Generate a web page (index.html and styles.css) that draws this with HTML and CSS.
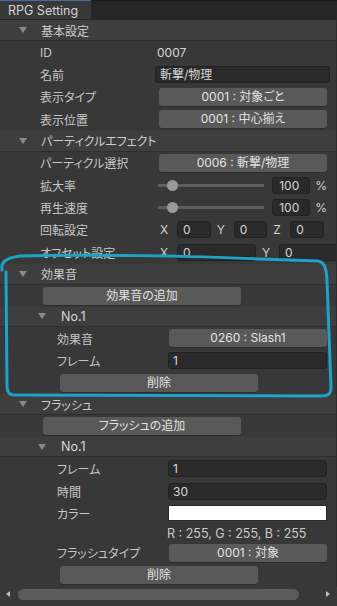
FILE: index.html
```html
<!doctype html>
<html lang="ja">
<head>
<meta charset="UTF-8">
<title>RPG Setting</title>
<meta name="viewport" content="width=device-width,initial-scale=1">
<link rel="stylesheet" href="styles.css">
</head>
<body>
<div class="window">
 <div class="tabbar"><div class="tab">RPG Setting</div></div>

 <div class="panel">
  <div class="header"><span class="tri"></span>基本設定</div>
  <div class="row"><span class="label">ID</span><span class="value">0007</span></div>
  <div class="row"><span class="label">名前</span><div class="field wide">斬撃/物理</div></div>
  <div class="row"><span class="label">表示タイプ</span><div class="btn">0001 : 対象ごと</div></div>
  <div class="row"><span class="label">表示位置</span><div class="btn">0001 : 中心揃え</div></div>

  <div class="header"><span class="tri"></span>パーティクルエフェクト</div>
  <div class="row"><span class="label">パーティクル選択</span><div class="btn">0006 : 斬撃/物理</div></div>
  <div class="row"><span class="label">拡大率</span><div class="slider"><span class="knob"></span></div><div class="field num">100</div><span class="unit">%</span></div>
  <div class="row"><span class="label">再生速度</span><div class="slider"><span class="knob"></span></div><div class="field num">100</div><span class="unit">%</span></div>
  <div class="row"><span class="label">回転設定</span>
   <div class="xyz">
    <div class="axis"><span class="letter">X</span><div class="field">0</div></div>
    <div class="axis"><span class="letter">Y</span><div class="field">0</div></div>
    <div class="axis"><span class="letter">Z</span><div class="field">0</div></div>
   </div>
  </div>
  <div class="row"><span class="label">オフセット設定</span>
   <div class="xy">
    <div class="axis"><span class="letter">X</span><div class="field">0</div></div>
    <div class="axis"><span class="letter">Y</span><div class="field">0</div></div>
   </div>
  </div>

  <div class="header"><span class="tri"></span>効果音</div>
  <div class="row add"><div class="btn">効果音の追加</div></div>
  <div class="subheader"><span class="tri"></span>No.1</div>
  <div class="row sub"><span class="label">効果音</span><div class="btn">0260 : Slash1</div></div>
  <div class="row sub"><span class="label">フレーム</span><div class="field">1</div></div>
  <div class="row del"><div class="btn">削除</div></div>

  <div class="header"><span class="tri"></span>フラッシュ</div>
  <div class="row add"><div class="btn">フラッシュの追加</div></div>
  <div class="subheader"><span class="tri"></span>No.1</div>
  <div class="row sub"><span class="label">フレーム</span><div class="field">1</div></div>
  <div class="row sub"><span class="label">時間</span><div class="field">30</div></div>
  <div class="row sub"><span class="label">カラー</span><div class="swatch"></div></div>
  <div class="rgb">R : 255, G : 255, B : 255</div>
  <div class="row sub"><span class="label">フラッシュタイプ</span><div class="btn">0001 : 対象</div></div>
  <div class="row del"><div class="btn">削除</div></div>
 </div>

 <div class="hscroll">
  <span class="arrow left"></span>
  <div class="thumb"></div>
  <span class="arrow right"></span>
 </div>

 <!-- hand drawn marker round the sound section -->
 <svg class="annotation" width="337" height="606" viewBox="0 0 337 606">
  <path d="M2 270 C1 263 4 258 20 256 C80 254 200 256 260 259 L318 261 C324 262 326 266 327 280 L331 388 C331 394 328 396 322 396 L14 395 C9 395 7 392 7 386 L6 272"
        fill="none" stroke="#1ea2c6" stroke-width="3" stroke-linecap="round" stroke-linejoin="round"/>
 </svg>
</div>
</body>
</html>
```

FILE: styles.css
```css
* {
    box-sizing: border-box;
}
body {
    margin: 0;
    background: #383838;
    font-family: "Inter", "Noto Sans CJK JP", sans-serif;
    font-size: 12px;
    color: #c6c6c6;
    font-feature-settings: "palt";
}
.window {
    position: relative;
    width: 337px;
    height: 606px;
    overflow: hidden;
    background: #383838;
}

/* tab strip */
.tabbar {
    height: 20px;
    background: #262626;
    border-top: 1px solid #1c1c1c;
}
.tab {
    width: 91px;
    height: 19px;
    padding-left: 8px;
    line-height: 19px;
    font-size: 12.5px;
    color: #d4d4d4;
    background: #383838;
    border-top: 1px solid #3d6e9e;
    margin-top: -1px;
}

.panel {
    height: 567px;
    overflow: hidden;
    border-right: 1px solid #2e2e2e;
}

/* foldout headers */
.header,
.subheader {
    display: flex;
    align-items: center;
    height: 21px;
    padding-left: 19px;
    background: #3e3e3e;
    border-bottom: 1px solid #2f2f2f;
    color: #cdcdcd;
}
.subheader {
    height: 20px;
    padding-left: 38px;
    color: #d6d6d6;
    font-size: 12.5px;
}
.tri {
    width: 0;
    height: 0;
    border-left: 4px solid transparent;
    border-right: 4px solid transparent;
    border-top: 6px solid #8a8a8a;
    margin-right: 14px;
}
.subheader .tri {
    margin-right: 15px;
}

/* property rows */
.row {
    display: flex;
    align-items: center;
    height: 22.4px;
    padding-left: 40px;
    padding-right: 9px;
    white-space: nowrap;
}
.label {
    flex: none;
    width: 115px;
}
.row.sub {
    padding-left: 57px;
}
.row.sub .label {
    width: 111px;
}
.value {
    padding-left: 2px;
    color: #d6d6d6;
}

.field {
    flex: 1;
    height: 17px;
    line-height: 15px;
    padding-left: 4px;
    background: #2a2a2a;
    border: 1px solid #222;
    border-radius: 3px;
    color: #d6d6d6;
    overflow: hidden;
}
.field.wide {
    margin-right: -3px;
}
.btn {
    flex: 1;
    height: 18px;
    line-height: 18px;
    margin-left: 4px;
    text-align: center;
    background: #595959;
    border-radius: 3px;
    color: #e2e2e2;
    box-shadow: 0 1px 0 #2c2c2c;
}
.row.sub .btn {
    margin-left: 1px;
}
.row.add {
    padding-left: 43px;
}
.row.del {
    padding-left: 60px;
}
.row.add .btn,
.row.del .btn {
    flex: none;
    width: 198px;
    margin-left: 0;
}

/* slider + number */
.slider {
    position: relative;
    width: 107px;
    height: 3px;
    margin-left: 3px;
    background: #5e5e5e;
}
.knob {
    position: absolute;
    left: 9px;
    top: -4px;
    width: 11px;
    height: 11px;
    border-radius: 50%;
    background: #999;
}
.field.num {
    flex: none;
    width: 38px;
    margin-left: 8px;
    padding-left: 6px;
}
.unit {
    margin-left: 5px;
    color: #d0d0d0;
}

/* vector fields */
.xyz {
    flex: none;
    width: 170px;
    display: grid;
    grid-template-columns: 1fr 1fr 1fr;
}
.xy {
    flex: none;
    width: 204px;
    display: grid;
    grid-template-columns: 1fr 1fr;
}
.axis {
    display: flex;
    align-items: center;
    padding-right: 1px;
}
.letter {
    flex: none;
    width: 22px;
    padding-left: 5px;
    color: #d0d0d0;
}
.axis .field {
    padding-left: 5px;
}

.swatch {
    flex: 1;
    height: 16px;
    background: #fff;
    border: 1px solid #2a2a2a;
}
.rgb {
    height: 17px;
    line-height: 17px;
    padding-left: 167px;
    font-size: 12.5px;
    color: #cacaca;
}

/* horizontal scrollbar */
.hscroll {
    display: flex;
    align-items: center;
    height: 14px;
    padding: 0 6px;
}
.arrow {
    width: 0;
    height: 0;
    border-top: 3px solid transparent;
    border-bottom: 3px solid transparent;
}
.arrow.left {
    border-right: 4px solid #bdbdbd;
}
.arrow.right {
    border-left: 4px solid #bdbdbd;
    margin-left: 27px;
}
.thumb {
    width: 281px;
    height: 11px;
    margin-left: 8px;
    border-radius: 6px;
    background: #5b5b5b;
}

.annotation {
    position: absolute;
    left: 0;
    top: 0;
    pointer-events: none;
}
```
